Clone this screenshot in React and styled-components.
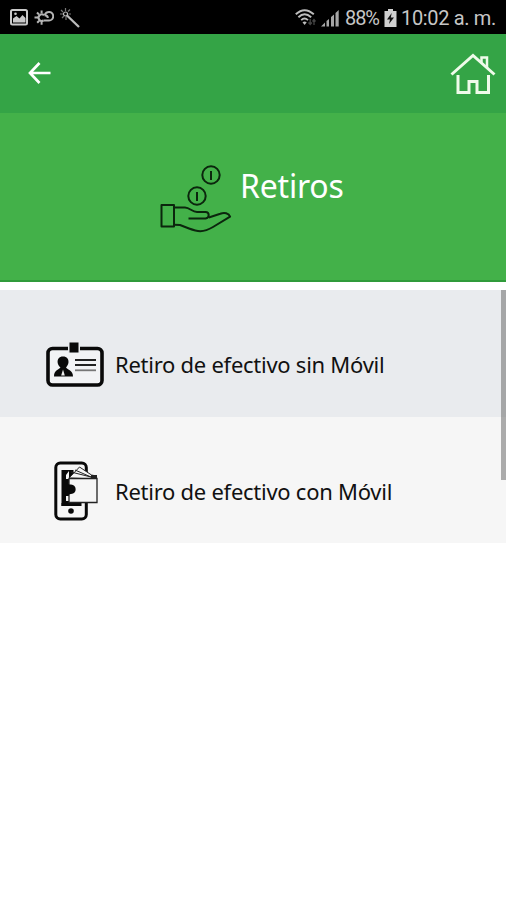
import React from 'react';
import styled, { createGlobalStyle } from 'styled-components';

const App = () => {
    return (
        <Screen>
            <GlobalStyle />
            <StatusBar>
                <StatusGroup $gap={6}>
                    <ImageIcon />
                    <WeatherIcon />
                    <WandIcon />
                </StatusGroup>
                <StatusGroup $gap={4}>
                    <WifiIcon />
                    <SignalIcon />
                    <StatusText $width={35} $spacing="-1.1px">88%</StatusText>
                    <BatteryIcon />
                    <StatusText $width={94} $spacing="-0.35px">10:02 a. m.</StatusText>
                </StatusGroup>
            </StatusBar>
            <NavBar>
                <NavButton aria-label="Volver"><BackIcon /></NavButton>
                <NavButton aria-label="Inicio"><HomeIcon /></NavButton>
            </NavBar>
            <Banner>
                <HandIcon />
                <Title>Retiros</Title>
            </Banner>
            <List>
                <Options>
                    <Option $height={127} $top={21} $background="#e9ebee">
                        <IconSlot><BadgeIcon /></IconSlot>
                        <Label>Retiro de efectivo sin Móvil</Label>
                    </Option>
                    <Option $height={126} $top={22} $background="#f6f6f6">
                        <IconSlot><PhoneIcon /></IconSlot>
                        <Label>Retiro de efectivo con Móvil</Label>
                    </Option>
                </Options>
                <Scrollbar />
            </List>
        </Screen>
    );
}

const ImageIcon = () => (
    <svg width="18" height="17" viewBox="0 0 18 17">
        <rect x="1" y="1" width="16" height="14.5" rx="1.5" fill="none" stroke="#c9c9c9" strokeWidth="2" />
        <path d="M3 12.5V9.500l3.500-2.500 3 2.500 3-3.500 3 3v4.500H3z" fill="#c9c9c9" />
        <circle cx="5.5" cy="4.800" r="1.3" fill="#c9c9c9" />
    </svg>
);

const WeatherIcon = () => (
    <svg width="20" height="17" viewBox="0 0 20 17" fill="none" stroke="#b5b5b5" strokeWidth="2">
        <path d="M9.500 11.500H15a4.300 4.300 0 1 0-4.300-5.200M10.500 6.300c2 0 3.300 1 3.300 2.700" />
        <path d="M10 6.300A3.200 3.200 0 1 0 9.500 11.300" />
        <path d="M7.600 1.500v2.800M3 3.500l2 2M.5 8.600h4M3.200 13.800l2-2M7.600 12.500v3.200" />
    </svg>
);

const WandIcon = () => (
    <svg width="20" height="20" viewBox="0 0 20 20" fill="none" stroke="#bcbcbc">
        <path d="M7 7.5l12 11.5" strokeWidth="2.3" />
        <path d="M5.5 0v3M1 2l2 2M0 6h3M2 10l2-2M6 9v3M8 3.5l2-2M8.5 6H11" strokeWidth="1.2" stroke="#777" />
        <circle cx="5.5" cy="6" r="2" strokeWidth="1.2" />
    </svg>
);

const WifiIcon = () => (
    <svg width="22" height="18" viewBox="0 0 22 18" fill="none" stroke="#bdbdbd" strokeWidth="1.9">
        <path d="M.8 5.3Q9.5-3 18.8 5.3M3.4 8.2Q9.5 2.4 16.2 8.2M6.2 11.1Q9.5 8 13 11.1" />
        <path d="M7.5 13.2Q9.6 11.8 11.7 13.2L9.6 16z" fill="#bdbdbd" stroke="none" />
        <path d="M15.2 10v5M13.5 13.5l1.7 2 1.7-2M19 16v-5M17.5 12.5l1.5-2 1.5 2" stroke="#444" strokeWidth="1.3" />
    </svg>
);

const SignalIcon = () => (
    <svg width="20" height="18" viewBox="0 0 20 18" fill="#a6a6a6">
        <path d="M0 17.5l4-4v4zM5.500 12l2.500-2v7.500H5.500zM10 8l3-2.500v12h-3zM14.500 4l3.200-3v16.500h-3.200z" />
    </svg>
);

const BatteryIcon = () => (
    <svg width="13" height="18" viewBox="0 0 13 18">
        <path d="M4 0h5v2h3.500v16H.5V2H4z" fill="#d0d0d0" />
        <path d="M7.700 4L3 10.500h3l-1 4.500 5-6.500H6.800z" fill="#111" />
    </svg>
);

const BackIcon = () => (
    <svg width="24" height="24" viewBox="0 0 24 24" fill="none" stroke="#fff" strokeWidth="2.700">
        <path d="M12.500 1L3 11l9.500 10M3 11h20.500" />
    </svg>
);

const HomeIcon = () => (
    <svg width="46" height="42" viewBox="0 0 46 42" fill="none" stroke="#effbea" strokeWidth="3">
        <path d="M1.500 21.500L23 2.500 44.500 21.500" />
        <path d="M8 22V39.500H19V28.500H27V39.500H38.500V22" />
        <path d="M31.500 9.500V4.500H37V15" strokeWidth="2.500" />
    </svg>
);

const HandIcon = () => (
    <svg width="72" height="68" viewBox="0 0 72 68" fill="none" stroke="#0b260d" strokeWidth="2" strokeLinejoin="round">
        <circle cx="51" cy="10" r="8.700" />
        <path d="M51 6v9" />
        <circle cx="37" cy="31" r="8.700" />
        <path d="M37 27v9" />
        <path d="M1.500 40H14v21.500H1.500z" />
        <path d="M14 42.500h11c5 .2 7 4.500 12 4.500h8.500c4 0 4.500 6 0 6.500H28.500" />
        <path d="M48.800 52.500l11.500-3.800c4-1.500 8.500-.7 9.800 3L53 62c-10 6-16 4.500-24 1.500L20 60l-6-.3" />
    </svg>
);

const BadgeIcon = () => (
    <svg width="58" height="46" viewBox="0 0 58 46">
        <rect x="2" y="7.500" width="54" height="36.500" rx="4.500" fill="#f2f3f5" stroke="#090909" strokeWidth="3.600" />
        <path d="M22 3h12v9H22z" fill="#e9ebee" />
        <path d="M23.500 1.500h9v10h-9z" fill="#090909" />
        <path d="M17 15.500c4 0 5.700 2.500 5.500 5.700-.2 2.500-1.500 3.800-2.500 5.300 1.500 2.500 7 2.500 7 9H8c0-6.500 4.500-6.500 6.500-9-1.500-1.500-2.800-3-2.900-5.300-.1-3.200 1.400-5.700 5.400-5.700z" fill="#090909" />
        <path d="M17 28.500l1.800 6h-3.600z" fill="#eee" />
        <path d="M29 19h21M29 24h21" stroke="#222" strokeWidth="1.800" />
        <path d="M29 29.300h21" stroke="#777" strokeWidth="1.800" />
    </svg>
);

const PhoneIcon = () => (
    <svg width="46" height="60" viewBox="-2 0 46 60">
        <rect x="1.800" y="2" width="30.500" height="56" rx="4.500" fill="#f6f6f6" stroke="#090909" strokeWidth="3" />
        <path d="M7.500 9h12v36h-12z" fill="#090909" />
        <path d="M7.500 42h20v3h-20z" fill="#090909" />
        <path d="M15 17L25.500 6l12 8 5 1v3z" fill="#f6f6f6" stroke="#222" />
        <path d="M17 11l20 5M21 9l16 7" fill="none" stroke="#222" />
        <path d="M12 14l3-4v8h-3zM12 35h4v5h-4z" fill="#f6f6f6" />
        <path d="M37 14h6v4h-6z" fill="#222" />
        <path d="M15 17.500h28v24H15z" fill="#f6f6f6" stroke="#222" strokeWidth="1.300" />
        <path d="M12 23c2-1 3 1 5 .5 6 0 6.500 9.500 0 9.500-2 0-3 1-5 2z" fill="#090909" />
        <circle cx="17" cy="50" r="2.800" fill="#090909" />
    </svg>
);

const GlobalStyle = createGlobalStyle`
    body {
        margin: 0;
        background: #fff;
    }
`;

const Screen = styled.div`
    display: flex;
    flex-direction: column;
    height: 900px;
    background: #fff;
    font-family: 'Noto Sans', sans-serif;
`;

const StatusBar = styled.header`
    display: flex;
    justify-content: space-between;
    box-sizing: border-box;
    height: 34px;
    padding: 0 11px 0 10px;
    background: #000;
`;

const StatusGroup = styled.div`
    display: flex;
    align-items: center;
    gap: ${props => props.$gap}px;
    padding-top: 1px;
`;

const StatusText = styled.span`
    width: ${props => props.$width}px;
    color: #c6c6c6;
    font-family: Roboto, sans-serif;
    font-size: 20px;
    letter-spacing: ${props => props.$spacing};
    white-space: nowrap;
`;

const NavBar = styled.nav`
    display: flex;
    justify-content: space-between;
    align-items: center;
    box-sizing: border-box;
    height: 79px;
    padding: 0 10px 0 27px;
    background: #34a446;
`;

const NavButton = styled.button`
    display: flex;
    padding: 0;
    border: 0;
    background: none;
`;

const Banner = styled.section`
    display: flex;
    gap: 8px;
    box-sizing: border-box;
    height: 169px;
    padding: 52px 0 0 160px;
    border-bottom: 2px solid #309b3b;
    background: #43b149;
`;

const Title = styled.h1`
    margin: 0;
    color: #fff;
    font-size: 32px;
    font-weight: 400;
    letter-spacing: -0.2px;
    line-height: 42px;
`;

const List = styled.main`
    display: grid;
    grid-template-columns: 1fr;
    margin-top: 8px;
`;

const Options = styled.div`
    grid-area: 1 / 1;
`;

const Option = styled.div`
    display: flex;
    align-items: center;
    box-sizing: border-box;
    height: ${props => props.$height}px;
    padding: ${props => props.$top}px 0 0 45px;
    background: ${props => props.$background};
`;

const IconSlot = styled.div`
    display: flex;
    justify-content: center;
    width: 60px;
    margin-right: 10px;

    svg {
        flex: none;
    }
`;

const Label = styled.span`
    color: #111;
    font-size: 22px;
    letter-spacing: -0.26px;
    white-space: nowrap;
`;

const Scrollbar = styled.div`
    grid-area: 1 / 1;
    justify-self: end;
    width: 5px;
    height: 190px;
    background: rgba(110, 110, 110, .55);
`;

export default App;
